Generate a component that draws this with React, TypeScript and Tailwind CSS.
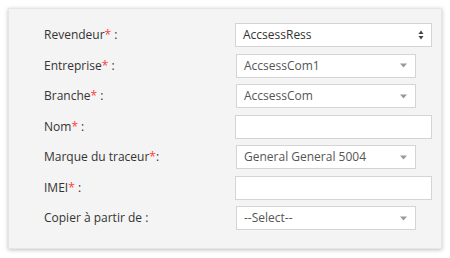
import React from "react";

type Row = {
  label: string;
  required: boolean;
  colonGap?: boolean;
  kind: "native" | "select" | "input";
  value?: string;
};

const rows: Row[] = [
  { label: "Revendeur", required: true, colonGap: true, kind: "native", value: "AccsessRess" },
  { label: "Entreprise", required: true, colonGap: true, kind: "select", value: "AccsessCom1" },
  { label: "Branche", required: true, colonGap: true, kind: "select", value: "AccsessCom" },
  { label: "Nom", required: true, colonGap: true, kind: "input" },
  { label: "Marque du traceur", required: true, colonGap: false, kind: "select", value: "General General 5004" },
  { label: "IMEI", required: true, colonGap: true, kind: "input" },
  { label: "Copier à partir de", required: false, colonGap: true, kind: "select", value: "--Select--" },
];

function Field({ row }: { row: Row }) {
  if (row.kind === "native") {
    return (
      <div className="flex items-center justify-between w-[197px] h-6 bg-white border border-[#d4d4d4] pl-[7px] pr-[7px] text-[#333]">
        <span>{row.value}</span>
        <svg width="6" height="10" viewBox="0 0 6 10">
          <path d="M3 0.5 L5.5 4 L0.5 4 Z" fill="#444" />
          <path d="M3 9.5 L5.5 6 L0.5 6 Z" fill="#444" />
        </svg>
      </div>
    );
  }
  if (row.kind === "select") {
    return (
      <div className="flex items-center justify-between w-[180px] h-6 ml-px bg-white border border-[#d4d4d4] pl-[7px] pr-[8px] text-[#555]">
        <span>{row.value}</span>
        <svg width="7" height="5" viewBox="0 0 7 5">
          <path d="M0 0.5 L7 0.5 L3.5 4.5 Z" fill="#999" />
        </svg>
      </div>
    );
  }
  return <div className="w-[197px] h-6 bg-white border border-[#d4d4d4]" />;
}

export default function App() {
  return (
    <div className="w-[450px] h-[258px] bg-white pt-2 pl-2" style={{ fontFamily: "'Open Sans', sans-serif" }}>
      <div className="w-[434px] h-[241px] bg-[#f4f4f4] border border-[#e6e6e6] shadow-[0_1px_4px_rgba(0,0,0,0.25)] pt-[14px] pl-[35px]">
        <div className="flex flex-col gap-[6.5px] text-[12px]">
          {rows.map((r) => (
            <div key={r.label} className="flex items-center h-6">
              <div className="w-[191px] text-[#333]">
                {r.label}
                {r.required && <span className="text-[#ff3b3b]">*</span>}
                {r.colonGap ? " :" : ":"}
              </div>
              <Field row={r} />
            </div>
          ))}
        </div>
      </div>
    </div>
  );
}
